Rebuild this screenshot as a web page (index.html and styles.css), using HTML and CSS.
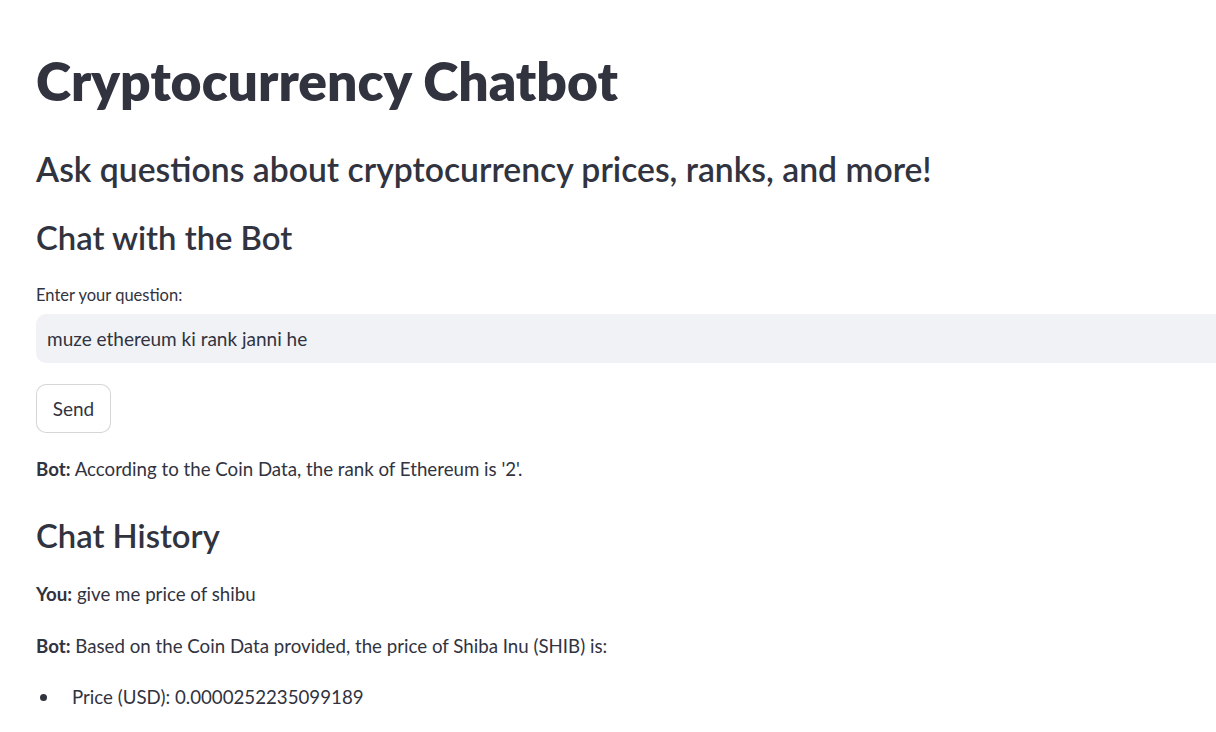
FILE: index.html
```html
<!DOCTYPE html>
<html lang="en">
<head>
<meta charset="utf-8">
<title>Cryptocurrency Chatbot</title>
<link rel="stylesheet" href="styles.css">
</head>
<body>
<main class="page">
  <h1 class="title">Cryptocurrency Chatbot</h1>
  <h2 class="subtitle">Ask questions about cryptocurrency prices, ranks, and more!</h2>
  <h3 class="section section-chat">Chat with the Bot</h3>
  <label class="label" for="q">Enter your question:</label>
  <div class="input-box"><span id="q" class="input-text">muze ethereum ki rank janni he</span></div>
  <button class="btn" type="button">Send</button>
  <p class="msg msg-answer"><strong>Bot:</strong> According to the Coin Data, the rank of Ethereum is '2'.</p>
  <h3 class="section section-history">Chat History</h3>
  <p class="msg msg-you"><strong>You:</strong> give me price of shibu</p>
  <p class="msg msg-bot"><strong>Bot:</strong> Based on the Coin Data provided, the price of Shiba Inu (SHIB) is:</p>
  <ul class="list">
    <li class="list-item"><span class="dot"></span><span>Price (USD): 0.0000252235099189</span></li>
  </ul>
</main>
</body>
</html>
```
FILE: styles.css
```css
html, body {
  margin: 0;
  padding: 0;
  background: #ffffff;
  overflow: hidden;
}
body {
  font-family: Lato, "Noto Sans", sans-serif;
  color: #31333f;
}
.page {
  width: 1300px;
  padding: 0 0 0 36px;
  display: flex;
  flex-direction: column;
  align-items: flex-start;
}
.title {
  margin: 47.5px 0 0;
  font-size: 53.4px;
  font-weight: 800;
  line-height: 64px;
}
.subtitle {
  margin: 35px 0 0;
  font-size: 33.7px;
  font-weight: 600;
  line-height: 44px;
}
.section {
  margin: 0;
  font-size: 32.8px;
  font-weight: 600;
  line-height: 40px;
}
.section-chat { margin-top: 27.3px; }
.section-history { margin-top: 32.5px; }
.label {
  margin-top: 27.3px;
  font-size: 16.5px;
  line-height: 20px;
}
.input-box {
  margin-top: 9.4px;
  width: 1230px;
  height: 49px;
  box-sizing: border-box;
  background: #f0f2f6;
  border-radius: 10px;
  display: flex;
  align-items: center;
  padding-left: 11px;
  font-size: 19px;
}
.btn {
  margin-top: 21px;
  width: 75px;
  height: 49px;
  box-sizing: border-box;
  background: #ffffff;
  border: 1px solid rgba(49, 51, 63, 0.2);
  border-radius: 10px;
  font-family: inherit;
  font-size: 19px;
  color: #31333f;
  padding: 0;
}
.msg {
  margin: 0;
  font-size: 18.7px;
  line-height: 28px;
}
.msg strong { font-weight: 700; }
.msg-answer { margin-top: 21.8px; }
.msg-you { margin-top: 24.5px; }
.msg-bot { margin-top: 23.7px; }
.list {
  margin: 23.3px 0 0;
  padding: 0;
  list-style: none;
}
.list-item {
  display: flex;
  align-items: center;
  font-size: 18.7px;
  line-height: 28px;
}
.dot {
  width: 7px;
  height: 7px;
  border-radius: 50%;
  background: #31333f;
  margin: 0 25px 0 4px;
}
```
